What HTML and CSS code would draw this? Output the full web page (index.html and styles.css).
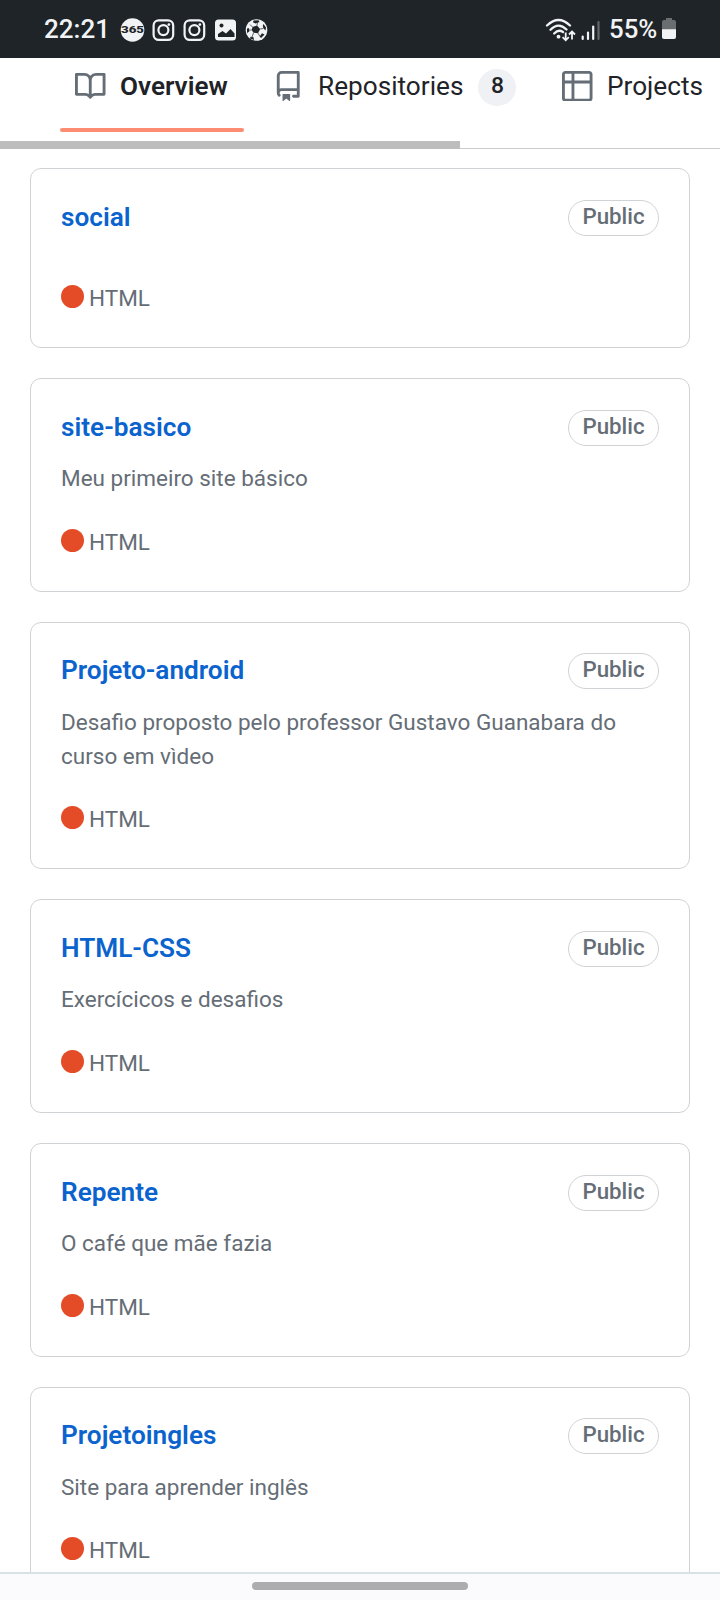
FILE: index.html
```html
<!DOCTYPE html>
<html lang="pt-BR">
<head>
<meta charset="utf-8">
<title>Overview</title>
<link rel="stylesheet" href="styles.css">
</head>
<body>
<div class="screen">
<header class="status">
  <span class="clock">22:21</span>
  <svg class="notices" width="152" height="26" viewBox="0 0 152 26">
    <circle cx="12.500" cy="13" r="11.800" fill="#f1f3f4"/>
    <text x="12.500" y="16.300" class="badge365" text-anchor="middle" textLength="23" lengthAdjust="spacingAndGlyphs">365</text>
    <g fill="none" stroke="#f1f3f4" stroke-width="2.200">
      <rect x="33.600" y="3.300" width="19.600" height="19.600" rx="5.200"/><circle cx="43.400" cy="13.100" r="5"/>
      <rect x="64.600" y="3.300" width="19.600" height="19.600" rx="5.200"/><circle cx="74.400" cy="13.100" r="5"/>
    </g>
    <circle cx="48.900" cy="7.600" r="1.400" fill="#f1f3f4"/><circle cx="79.900" cy="7.600" r="1.400" fill="#f1f3f4"/>
    <rect x="95" y="2.500" width="21" height="21" rx="3.500" fill="#f1f3f4"/>
    <circle cx="101.500" cy="8.500" r="2" fill="#1f2428"/>
    <path d="M98 20v-3l4.500-3 3.500 2.500 4.500-4.500 4 4.500v3.500z" fill="#1f2428"/>
    <circle cx="136.500" cy="13" r="10.800" fill="#f1f3f4"/>
    <g fill="#1f2428">
      <path d="M132.500 10l4.500-1.500 3.200 3.500-2.200 4.200-4.500-.5-1.800-2.700z"/>
      <path d="M133.500 3.500l5-.3 1 1.800-4 1.500-2.500-1.200zM143.500 7l2.500 3.500-.5 3-2.200-2.200-.5-2.800zM144.500 17.500l-3.500 3.500-1.300-1.500 2.300-3.200zM134 23l-4-1.500.5-1.700 3 .5zM127 16v-4.500l1.800-.5.5 3.500z"/>
    </g>
    <path d="M137 8.500l.5-3M140.200 12l3-.5M138 16.200l2 3.300M133.500 16l-1.500 4M131.700 13h-3M132.500 10l-2.500-2.500" stroke="#1f2428" stroke-width=".7" fill="none"/>
  </svg>
  <div class="gauges">
    <svg width="56" height="26" viewBox="0 0 56 26">
      <g fill="none" stroke="#f1f3f4" stroke-width="2.300" stroke-linecap="round">
        <path d="M2 9.500Q13.500-1.500 25 9.500M5.500 13.700Q13.500 5.500 21.500 13.500M9.200 17.500Q13.500 13 18 16"/>
      </g>
      <circle cx="13.500" cy="20.700" r="1.900" fill="#f1f3f4"/>
      <path d="M20.700 16.500v7.500M17.600 21.200l3.100 3.100 3.100-3.100M27 23.500v-7.500M24 18.500l3-3 3 3" stroke="#f1f3f4" stroke-width="1.800" fill="none"/>
      <path d="M37.700 20.500v2.500M43 16.500v6.500M48.200 10.500v12.500" stroke="#f1f3f4" stroke-width="2.200" stroke-linecap="round"/>
      <path d="M53.500 6v17" stroke="#63676a" stroke-width="2.200" stroke-linecap="round"/>
    </svg>
    <span class="percent">55%</span>
    <svg class="battery" width="14" height="22" viewBox="0 0 14 22">
      <path d="M4 0h6v2h2q2 0 2 2v8H0V4q0-2 2-2h2z" fill="#6a6e71"/>
      <path d="M0 11.300h14V19q0 2-2 2H2q-2 0-2-2z" fill="#f1f3f4"/>
    </svg>
  </div>
</header>
<nav class="tabs">
  <a class="tab overview">
    <svg class="icon" viewBox="0 0 16 16"><path d="M0 1.750A.75.75 0 0 1 .75 1h4.253c1.227 0 2.317.59 3 1.501A3.743 3.743 0 0 1 11.006 1h4.245a.75.75 0 0 1 .75.75v10.500a.75.75 0 0 1-.75.75h-4.507a2.250 2.250 0 0 0-1.591.659l-.622.621a.75.75 0 0 1-1.060 0l-.622-.621A2.250 2.250 0 0 0 5.258 13H.75a.75.75 0 0 1-.75-.75Zm7.251 10.324.004-5.073-.002-2.253A2.250 2.250 0 0 0 5.003 2.500H1.500v9h3.757a3.750 3.750 0 0 1 1.994.574ZM8.755 4.750l-.004 7.322a3.752 3.752 0 0 1 1.992-.572H14.500v-9h-3.495a2.250 2.250 0 0 0-2.250 2.250Z"/></svg>
    <span>Overview</span>
  </a>
  <a class="tab repos">
    <svg class="icon" viewBox="0 0 16 16"><path d="M2 2.500A2.500 2.500 0 0 1 4.500 0h8.750a.75.75 0 0 1 .75.75v12.500a.75.75 0 0 1-.75.75h-2.500a.75.75 0 0 1 0-1.500h1.750v-2h-8a1 1 0 0 0-.714 1.700.75.75 0 1 1-1.072 1.050A2.495 2.495 0 0 1 2 11.500Zm10.500-1h-8a1 1 0 0 0-1 1v6.708A2.486 2.486 0 0 1 4.500 9h8ZM5 12.250a.25.25 0 0 1 .25-.25h3.500a.25.25 0 0 1 .25.25v3.250a.25.25 0 0 1-.4.2l-1.450-1.087a.249.249 0 0 0-.3 0L5.400 15.700a.25.25 0 0 1-.4-.2Z"/></svg>
    <span>Repositories</span>
    <span class="count">8</span>
  </a>
  <a class="tab projects">
    <svg class="icon" viewBox="0 0 16 16"><path d="M0 1.750C0 .784.784 0 1.750 0h12.500C15.216 0 16 .784 16 1.750v12.500A1.750 1.750 0 0 1 14.250 16H1.750A1.750 1.750 0 0 1 0 14.250ZM6.500 6.500v8h7.750a.25.25 0 0 0 .25-.25V6.500Zm8-1.500V1.750a.25.25 0 0 0-.25-.25H6.500V5Zm-13 1.500v7.750c0 .138.112.25.25.25H5v-8ZM5 5V1.500H1.750a.25.25 0 0 0-.25.25V5Z"/></svg>
    <span>Projects</span>
  </a>
  <div class="scrollbar"></div>
</nav>
<main class="list">
  <article class="card"><div class="head"><a class="name">social</a><span class="pill">Public</span></div><p class="desc"></p><div class="lang"><i class="dot"></i><span>HTML</span></div></article>
  <article class="card"><div class="head"><a class="name">site-basico</a><span class="pill">Public</span></div><p class="desc">Meu primeiro site básico</p><div class="lang"><i class="dot"></i><span>HTML</span></div></article>
  <article class="card"><div class="head"><a class="name">Projeto-android</a><span class="pill">Public</span></div><p class="desc">Desafio proposto pelo professor Gustavo Guanabara do curso em vìdeo</p><div class="lang"><i class="dot"></i><span>HTML</span></div></article>
  <article class="card"><div class="head"><a class="name">HTML-CSS</a><span class="pill">Public</span></div><p class="desc">Exercícicos e desafios</p><div class="lang"><i class="dot"></i><span>HTML</span></div></article>
  <article class="card"><div class="head"><a class="name">Repente</a><span class="pill">Public</span></div><p class="desc">O café que mãe fazia</p><div class="lang"><i class="dot"></i><span>HTML</span></div></article>
  <article class="card"><div class="head"><a class="name">Projetoingles</a><span class="pill">Public</span></div><p class="desc">Site para aprender inglês</p><div class="lang"><i class="dot"></i><span>HTML</span></div></article>
</main>
<footer class="home"><div class="handle"></div></footer>
</div>
</body>
</html>
```
FILE: styles.css
```css
* { box-sizing: border-box; }
body { margin: 0; background: #fff; font-family: Roboto, sans-serif; color: #1f2328; }
.screen { width: 720px; height: 1600px; display: flex; flex-direction: column; overflow: hidden; }
.status { flex: none; height: 58px; background: #1f2428; color: #f1f3f4; display: flex; align-items: center; padding: 0 43px 0 44px; font-weight: 500; }
.clock { width: 76px; font-size: 26px; line-height: 30px; white-space: nowrap; }
.notices { margin-top: 1px; }
.badge365 { font: 900 9.500px Roboto, sans-serif; fill: #1f2428; }
.gauges { display: flex; align-items: center; margin-left: auto; }
.percent { font-size: 25.800px; line-height: 30px; width: 57px; padding-left: 8px; white-space: nowrap; }
.battery { margin-left: 4px; margin-right: 1px; }
.tabs { position: relative; flex: none; height: 91px; border-bottom: 1px solid #c9cbcd; display: flex; align-items: flex-start; font-size: 26.200px; }
.tab { display: flex; align-items: center; height: 56px; white-space: nowrap; }
.icon { flex: none; width: 30.500px; height: 30.500px; margin-right: 14.500px; fill: #656d76; }
.overview { position: relative; margin-left: 60px; width: 184px; padding-left: 15px; font-weight: 600; font-size: 26.100px; }
.overview::after { content: ""; position: absolute; left: 0; right: 0; top: 70px; height: 4px; border-radius: 2px; background: #fd8c73; }
.repos { margin-left: 29px; width: 244px; }
.count { margin: 2px 0 0 15px; width: 38px; height: 37px; border-radius: 19px; background: #eff1f4; font-size: 22.900px; font-weight: 500; line-height: 34px; text-align: center; }
.projects { margin-left: 45px; }
.scrollbar { position: absolute; left: 0; bottom: -1px; width: 460px; height: 8px; background: #bdbdbd; }
.list { flex: 1; min-height: 0; overflow: hidden; padding: 19px 30px 0; display: flex; flex-direction: column; gap: 30px; }
.card { flex: none; border: 1px solid #d0d3d6; border-radius: 11px; padding: 30.500px 30px 32px; font-size: 22.500px; line-height: 34.080px; color: #656d76; }
.head { display: flex; justify-content: space-between; height: 35.500px; }
.name { font-size: 26.200px; font-weight: 600; line-height: 35px; color: #0b63ce; }
.pill { width: 91px; height: 36px; border: 1px solid #d0d3d6; border-radius: 18px; font-size: 22.300px; font-weight: 500; line-height: 31px; text-align: center; }
.desc { margin: 16px 0 0; }
.desc:empty { margin: 0; height: 16.500px; }
.lang { display: flex; align-items: center; margin-top: 29.500px; }
.dot { width: 23px; height: 23px; margin: 0 5px 3px 0; border-radius: 50%; background: #e34c26; }
.home { flex: none; height: 28px; background: #fbfbfe; border-top: 2px solid #d9e1e5; display: flex; justify-content: center; padding-top: 8px; }
.handle { width: 216px; height: 8px; border-radius: 4px; background: #adadb0; }
```
